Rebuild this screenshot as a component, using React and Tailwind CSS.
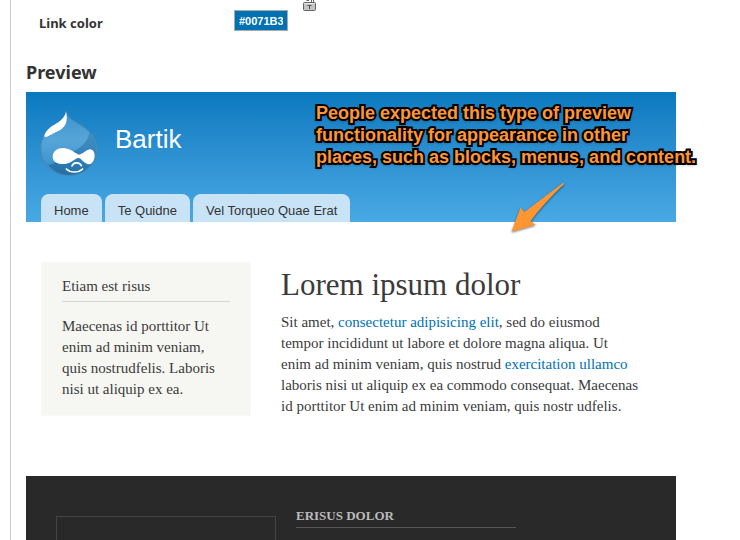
import React, { useState } from 'react';

const tabs = ['Home', 'Te Quidne', 'Vel Torqueo Quae Erat'];

function LockIcon() {
  return (
    <svg width="14" height="12" viewBox="0 0 14 12" aria-hidden="true">
      <path d="M3.5 0.5H6M8.500 0V3M10.500 0V3" stroke="#666" fill="none" />
      <rect x="0.5" y="2.5" width="12" height="8" rx="1" fill="#c4c4c4" stroke="#666" />
      <path d="M1.5 3.5H11.5" stroke="#e8e8e8" />
      <path d="M4.5 5.5H8.5M6.500 5V9" stroke="#555" />
    </svg>
  );
}

function DropLogo() {
  return (
    <svg width="58" height="66" viewBox="13 7 174 198" aria-hidden="true">
      <defs>
        <linearGradient id="drop" x1="0" y1="0" x2="0" y2="1">
          <stop offset="0" stopColor="#3a93cd" />
          <stop offset="0.45" stopColor="#57a5d8" />
          <stop offset="0.75" stopColor="#4499d1" />
          <stop offset="1" stopColor="#2f80b6" />
        </linearGradient>
        <linearGradient id="shade" x1="0.8" y1="0" x2="0.3" y2="1">
          <stop offset="0" stopColor="#3583ba" />
          <stop offset="1" stopColor="#1c689f" />
        </linearGradient>
      </defs>
      <path
        d="M92 10C94 28 105 34 128 48C160 66 184 88 184 122C184 172 146 203 100 203C50 203 15 168 15 122C15 88 36 66 62 50C80 40 90 30 92 10Z"
        fill="url(#drop)"
        stroke="#4a87ab"
        strokeWidth="3"
      />
      <path
        d="M161 70C160 98 140 118 112 132C84 146 66 166 38 172C56 192 76 202 100 202C146 202 182 170 182 122C182 100 174 84 161 70Z"
        fill="url(#shade)"
        opacity="0.7"
      />
      <path d="M91 12C86 36 66 44 48 56C30 69 21 88 29 88C38 88 48 79 66 71C90 60 98 40 91 12Z" fill="#fff" />
      <path
        d="M51 147C51 130 66 121 82 121C102 121 114 134 130 141C146 137 152 125 164 125C177 127 180 144 174 158C168 174 156 172 146 164C138 157 134 151 128 151C118 152 106 169 84 169C64 169 51 162 51 147Z"
        fill="#fff"
      />
      <path d="M109 175C113 164 130 161 137 174" stroke="#fff" strokeWidth="5" fill="none" strokeLinecap="round" />
      <path d="M92 184C104 196 128 196 141 184" stroke="#fff" strokeWidth="5" fill="none" strokeLinecap="round" />
    </svg>
  );
}

function Arrow() {
  return (
    <svg width="56" height="54" viewBox="0 0 56 54" className="drop-shadow-[0_1px_1px_rgba(0,0,0,0.5)]" aria-hidden="true">
      <path
        d="M52.500 1.500L13.500 31L9.500 26.500L0.500 50.800L24.700 43.700L19.500 40Q33 22 53 3Z"
        fill="#ff9632"
      />
    </svg>
  );
}

export default function App() {
  const [linkColor, setLinkColor] = useState('#0071B3');

  return (
    <div className="h-screen overflow-hidden bg-white pl-[10px] text-[#3b3b3b]">
      <div className="flex h-full flex-col border-l border-[#ccc] pr-16 pl-[15px]">
        <div className="flex h-[62px] shrink-0 items-start pl-[13px]">
          <label htmlFor="link-color" className="w-[195px] pt-[15px] font-['Noto_Sans'] text-[13px] leading-4 font-bold text-[#333]">
            Link color
          </label>
          <input
            id="link-color"
            value={linkColor}
            onChange={event => setLinkColor(event.target.value)}
            className="mt-[10px] h-[21px] w-[54px] border border-[#aaa] bg-[#0071b3] px-1 font-['Liberation_Sans'] text-[11px] font-bold text-white outline-none"
          />
          <button type="button" aria-label="Unlock link color" className="ml-[15px]">
            <LockIcon />
          </button>
        </div>

        <h2 className="h-[30px] shrink-0 font-['Noto_Sans'] text-[18px] leading-5 font-bold text-[#333]">Preview</h2>

        <header className="relative flex h-[130px] shrink-0 flex-col justify-between bg-linear-to-b from-[#0779bf] to-[#48a9e4] px-[14px] pt-[18px]">
          <div className="flex items-start gap-[17px]">
            <DropLogo />
            <h1 className="pt-3 font-['Liberation_Sans'] text-[26px] leading-[34px] text-white">Bartik</h1>
          </div>
          <nav className="flex gap-[3px] pl-px font-['Liberation_Sans'] text-[13px] leading-7 text-[#333]">
            {tabs.map(tab => (
              <a key={tab} href="#" className="h-7 rounded-t-lg bg-[#c8e3f5] px-[13px] pt-[3px]">
                {tab}
              </a>
            ))}
          </nav>

          <p className="absolute top-[10px] left-[290px] font-['Liberation_Sans'] text-[18px] leading-[22px] font-bold whitespace-nowrap text-[#ff9632] [-webkit-text-stroke:4px_#000] [paint-order:stroke_fill] [text-shadow:0_2px_3px_rgba(0,0,0,0.5)]">
            People expected this type of preview
            <br />
            functionality for appearance in other
            <br />
            places, such as blocks, menus, and content.
          </p>
          <div className="absolute top-[89px] left-[485px]">
            <Arrow />
          </div>
        </header>

        <main className="flex shrink-0 items-start gap-[30px] px-[15px] pt-10 pb-[59px] font-['Liberation_Serif'] text-[15px] leading-[21px]">
          <aside className="w-[210px] shrink-0 border border-[#f9f9f9] bg-[#f6f6f2] px-5 pt-[13px] pb-[15px]">
            <h2 className="mb-[14px] border-b border-[#d6d6d6] pb-1">Etiam est risus</h2>
            <p>Maecenas id porttitor Ut enim ad minim veniam, quis nostrudfelis. Laboris nisi ut aliquip ex ea.</p>
          </aside>
          <article className="min-w-0 flex-1 pr-5">
            <h1 className="mb-2 pt-1 text-[31px] leading-[38px] whitespace-nowrap">Lorem ipsum dolor</h1>
            <p>
              Sit amet, <a href="#" className="text-[#0071b3]">consectetur adipisicing elit</a>, sed do eiusmod tempor
              incididunt ut labore et dolore magna aliqua. Ut enim ad minim veniam, quis nostrud{' '}
              <a href="#" className="text-[#0071b3]">exercitation ullamco</a> laboris nisi ut aliquip ex ea commodo
              consequat. Maecenas id porttitor Ut enim ad minim veniam, quis nostr udfelis.
            </p>
          </article>
        </main>

        <footer className="flex flex-1 gap-5 bg-[#292929] px-[30px] pt-[30px]">
          <div className="mt-[10px] w-[220px] border border-b-0 border-[#444]" />
          <h2 className="h-[22px] w-[220px] border-b border-[#555] font-['Liberation_Serif'] text-[13px] leading-5 font-bold text-[#bbb] uppercase">
            Erisus dolor
          </h2>
        </footer>
      </div>
    </div>
  );
}
